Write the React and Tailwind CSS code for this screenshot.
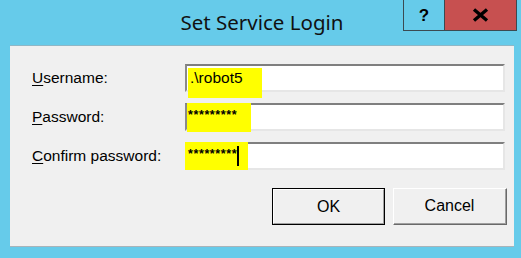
export default function App() {
  const label = 'text-[15.5px] text-black';
  const input =
    'relative w-[320px] h-[28px] bg-white border-t-2 border-l-2 border-r-2 border-b-2 border-t-[#7f7f7f] border-l-[#8a8a8a] border-r-[#e6e6e6] border-b-[#e6e6e6] flex items-center';

  return (
    <div
      className="relative w-[521px] h-[258px] bg-[#66cbea] overflow-hidden"
      style={{ fontFamily: '"Liberation Sans", Arial, sans-serif' }}
    >
      {/* Title bar */}
      <div className="h-[45px] flex items-center justify-center pl-[3px] pb-[1px]">
        <span
          className="text-[20.5px] text-[#111] leading-none"
          style={{ fontFamily: '"Noto Sans", "Open Sans", sans-serif' }}
        >
          Set Service Login
        </span>
      </div>

      {/* Caption buttons */}
      <div className="absolute top-0 left-[403px] flex border border-t-0 border-[#3b4a52]">
        <div className="w-[41px] h-[30px] flex items-center justify-center border-r border-[#3b4a52]">
          <span className="text-[17px] font-bold text-black leading-none">?</span>
        </div>
        <div className="w-[71px] h-[30px] bg-[#c75050] flex items-center justify-center">
          <svg width="17" height="14" viewBox="0 0 17 14">
            <path d="M2 1.5L15 12.5M15 1.5L2 12.5" stroke="#000" strokeWidth="3.4" />
          </svg>
        </div>
      </div>

      {/* Client area */}
      <div className="ml-[10px] w-[504px] h-[202px] bg-[#f0f0f0] border-t border-t-[#8fb7c6] border-b border-b-[#a8b4ba] pt-[18px]">
        <div className="flex flex-col gap-[11px] pl-[22px]">
          <div className="flex items-center">
            <div className={`${label} w-[153px]`}>
              <span className="underline underline-offset-2">U</span>sername:
            </div>
            <div className={input}>
              <div className="absolute left-[1px] top-[2px] w-[74px] h-[30px] bg-[#ffff00]" />
              <span className="relative pl-[3px] text-[15.5px] text-black">.\robot5</span>
            </div>
          </div>

          <div className="flex items-center">
            <div className={`${label} w-[153px]`}>
              <span className="underline underline-offset-2">P</span>assword:
            </div>
            <div className={input}>
              <div className="absolute left-[-0px] top-[-2px] w-[64px] h-[29px] bg-[#ffff00]" />
              <span className="relative pl-[1px] text-[12.5px] font-bold text-black tracking-[0.6px] -mt-[3px]">*********</span>
            </div>
          </div>

          <div className="flex items-center">
            <div className={`${label} w-[153px]`}>
              <span className="underline underline-offset-2">C</span>onfirm password:
            </div>
            <div className={input}>
              <div className="absolute left-[-2px] top-[-2px] w-[63px] h-[28px] bg-[#ffff00]" />
              <span className="relative pl-[1px] text-[12.5px] font-bold text-black tracking-[0.6px] -mt-[3px]">*********</span>
              <span className="relative ml-[0px] w-[2px] h-[20px] bg-black" />
            </div>
          </div>
        </div>

        {/* Buttons */}
        <div className="flex justify-end gap-[8px] pr-[7px] mt-[18px]">
          <button className="w-[113px] h-[37px] border border-black bg-[#f0f0f0] text-[16px] text-black">
            <div className="w-full h-full border-t border-l border-white border-r border-b border-r-[#a0a0a0] border-b-[#a0a0a0] flex items-center justify-center">
              OK
            </div>
          </button>
          <button className="w-[114px] h-[37px] border border-t-white border-l-white border-r-[#696969] border-b-[#696969] bg-[#f0f0f0] text-[16px] text-black">
            <div className="w-full h-full border-r border-b border-r-[#a0a0a0] border-b-[#a0a0a0] flex items-center justify-center">
              Cancel
            </div>
          </button>
        </div>
      </div>
    </div>
  );
}
